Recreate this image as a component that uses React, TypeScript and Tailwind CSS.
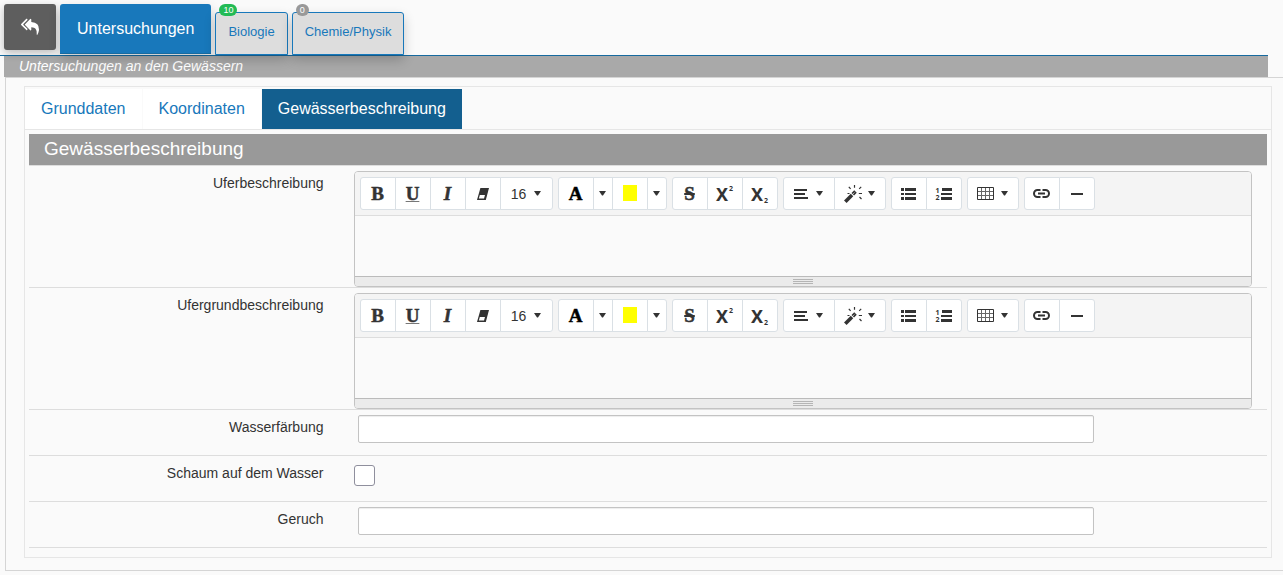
import type { ReactNode } from "react";

const sections = [
  { label: "Biologie", count: 10, badge: "bg-[#22bb55]" },
  { label: "Chemie/Physik", count: 0, badge: "bg-[#999999]" },
];

const tabs = ["Grunddaten", "Koordinaten", "Gewässerbeschreibung"];

function ReplyAllIcon() {
  return (
    <svg width="18" height="18" viewBox="0 0 1792 1792" fill="currentColor" aria-hidden="true">
      <path d="M640 1082v70q0 42-39 59-13 5-25 5-27 0-45-19l-512-512q-19-19-19-45t19-45l512-512q29-31 70-14 39 17 39 59v69l-397 398q-19 19-19 45t19 45zm1152 58q0 58-17 133.500t-38.500 138-48 125-40.500 90.500l-20 40q-8 17-28 17-6 0-9-1-25-8-23-34 43-400-106-565-64-71-170.500-110.500t-267.500-52.500v251q0 42-39 59-13 5-25 5-27 0-45-19l-512-512q-19-19-19-45t19-45l512-512q29-31 70-14 39 17 39 59v262q411 28 599 221 169 173 169 509z" />
    </svg>
  );
}

function Caret() {
  return (
    <svg width="7" height="5" viewBox="0 0 7 5" fill="currentColor" aria-hidden="true">
      <path d="M0 0h7L4 4.4H3z" />
    </svg>
  );
}

function ToolButton({
  title,
  width = "w-9",
  children,
}: {
  title: string;
  width?: string;
  children: ReactNode;
}) {
  return (
    <button
      type="button"
      title={title}
      className={`${width} -ml-px flex h-[33px] items-center justify-center border border-[#dae0e5] bg-white text-[#333] first:ml-0 first:rounded-l-[3px] last:rounded-r-[3px] hover:bg-gray-100`}
    >
      {children}
    </button>
  );
}

function Group({ children }: { children: ReactNode }) {
  return <div className="flex">{children}</div>;
}

const letter =
  "font-['Liberation_Serif',serif] text-[19px] leading-5 font-bold [-webkit-text-stroke:0.5px_currentColor]";

function Toolbar() {
  return (
    <div className="flex flex-wrap gap-[5px] border-b border-[#ddd] bg-[#f4f4f4] p-[5px]">
      <Group>
        <ToolButton title="Fett">
          <span className={letter}>B</span>
        </ToolButton>
        <ToolButton title="Unterstrichen">
          <span className={`${letter} underline decoration-[#777] decoration-1 underline-offset-1`}>U</span>
        </ToolButton>
        <ToolButton title="Kursiv">
          <span className={`${letter} italic`}>I</span>
        </ToolButton>
        <ToolButton title="Formatierung entfernen">
          <svg width="14" height="12" viewBox="0 0 14 12" aria-hidden="true">
            <path d="M4.400 0H13L9.800 12H1z" fill="#333" />
            <path d="M3.800 7h5.200L8 10.600H2.900z" fill="#fff" />
          </svg>
        </ToolButton>
        <ToolButton title="Schriftgröße" width="w-[53px]">
          <span className="flex items-center gap-2 text-sm">
            16 <Caret />
          </span>
        </ToolButton>
      </Group>

      <Group>
        <ToolButton title="Schriftfarbe">
          <span className={`${letter} text-black`}>A</span>
        </ToolButton>
        <ToolButton title="Weitere Schriftfarben" width="w-5">
          <Caret />
        </ToolButton>
        <ToolButton title="Hintergrundfarbe">
          <span className="mb-px h-4 w-[14px] bg-[#ffff00]" />
        </ToolButton>
        <ToolButton title="Weitere Hintergrundfarben" width="w-5">
          <Caret />
        </ToolButton>
      </Group>

      <Group>
        <ToolButton title="Durchgestrichen">
          <span className={`${letter} line-through decoration-2`}>S</span>
        </ToolButton>
        <ToolButton title="Hochgestellt">
          <span className="flex items-start gap-px font-['Noto_Sans',sans-serif] font-bold">
            <span className="text-lg leading-5">X</span>
            <span className="text-[7px] leading-[10px]">2</span>
          </span>
        </ToolButton>
        <ToolButton title="Tiefgestellt">
          <span className="flex items-end gap-px font-['Noto_Sans',sans-serif] font-bold">
            <span className="text-lg leading-5">X</span>
            <span className="text-[7px] leading-[7px]">2</span>
          </span>
        </ToolButton>
      </Group>

      <Group>
        <ToolButton title="Absatz" width="w-[52px]">
          <span className="flex items-center gap-2">
            <svg width="14" height="12" viewBox="0 0 14 12" fill="#333" aria-hidden="true">
              <path d="M0 1h13v2H0zM0 5h11v2H0zM0 9h14v2H0z" />
            </svg>
            <Caret />
          </span>
        </ToolButton>
        <ToolButton title="Stil" width="w-[52px]">
          <span className="flex items-center gap-[6px]">
            <svg width="18" height="18" viewBox="0 0 18 18" fill="none" stroke="#333" aria-hidden="true">
              <path d="M1.300 16.700L8 10" strokeWidth="3.600" />
              <path d="M8.800 9.200L11.500 6.500" strokeWidth="3.600" />
              <path d="M9.200 8.800l1.200-1.200" stroke="#ccc" />
              <path d="M10.500 0v2.800M4.800 1.800l1.800 2M17.200 1.800l-2 2M14.800 8.500H18M15.500 12l2 2M3.500 8.500h2" strokeWidth="1.200" />
            </svg>
            <Caret />
          </span>
        </ToolButton>
      </Group>

      <Group>
        <ToolButton title="Aufzählung">
          <svg width="15" height="12" viewBox="0 0 15 12" fill="#333" aria-hidden="true">
            <path d="M0 0h3v3H0zM4 0h11v3H4zM0 5h3v2H0zM4 5h11v2H4zM0 9h3v3H0zM4 9h11v3H4z" />
          </svg>
        </ToolButton>
        <ToolButton title="Nummerierung">
          <span className="flex items-center gap-px">
            <span className="flex flex-col font-['Noto_Sans',sans-serif] text-[7px] leading-[7px] font-bold">
              <span>1</span>
              <span>2</span>
            </span>
            <svg width="11" height="12" viewBox="0 0 11 12" fill="#333" aria-hidden="true">
              <path d="M1 0h10v3H1zM0 5h11v2H0zM0 9h11v3H0z" />
            </svg>
          </span>
        </ToolButton>
      </Group>

      <Group>
        <ToolButton title="Tabelle" width="w-[52px]">
          <span className="flex items-center gap-[7px]">
            <svg width="17" height="13" viewBox="0 0 17 13" fill="none" aria-hidden="true">
              <path d="M1 4.500h15M1 8.500h15M4.500 1v11M8.500 1v11M12.500 1v11" stroke="#666" />
              <path d="M.5.5h16v12H.5z" stroke="#333" />
            </svg>
            <Caret />
          </span>
        </ToolButton>
      </Group>

      <Group>
        <ToolButton title="Link einfügen">
          <svg width="17" height="9" viewBox="0 0 17 9" fill="none" stroke="#333" strokeWidth="2" aria-hidden="true">
            <path d="M7.500 1H4.500a3.500 3.500 0 0 0 0 7h3M9.500 1h3a3.500 3.500 0 0 1 0 7h-3M5 4.500h7" />
          </svg>
        </ToolButton>
        <ToolButton title="Horizontale Linie">
          <span className="h-[2px] w-3 bg-[#333]" />
        </ToolButton>
      </Group>
    </div>
  );
}

function Editor({ id }: { id: string }) {
  return (
    <div className="overflow-hidden rounded border border-[#c3c3c3]">
      <Toolbar />
      <textarea id={id} className="block h-[60px] w-full resize-none p-2 text-sm outline-none" />
      <div className="flex h-[10px] cursor-ns-resize flex-col items-center gap-px border-t border-[#bbb] bg-[#ebebeb] pt-[2px]">
        <div className="h-px w-5 bg-[#b5b5b5]" />
        <div className="h-px w-5 bg-[#b5b5b5]" />
        <div className="h-px w-5 bg-[#b5b5b5]" />
      </div>
    </div>
  );
}

function Row({ id, label, children }: { id: string; label: string; children: ReactNode }) {
  return (
    <div className="flex min-h-[46px] border-b border-[#ddd]">
      <label htmlFor={id} className="w-1/4 pt-[7px] pr-[15px] text-right text-sm leading-5">
        {label}
      </label>
      <div className="w-3/4 px-[15px] pt-[5px]">{children}</div>
    </div>
  );
}

function TextField({ id }: { id: string }) {
  return (
    <input
      id={id}
      type="text"
      className="ml-1 block h-7 w-[82%] rounded-[2px] border border-[#c3c3c3] bg-white px-2 text-sm shadow-[inset_0_1px_1px_rgba(0,0,0,0.075)] outline-none"
    />
  );
}

export default function App() {
  return (
    <div className="min-h-screen bg-[#fafafa] font-['Liberation_Sans',Arial,sans-serif] text-[#333]">
      <header className="relative z-10 mr-[15px] flex h-14 items-start gap-1 border-b border-[#176a9f] pt-1 pl-1">
        <button
          type="button"
          aria-label="Zurück"
          className="flex h-[46px] w-[52px] items-center justify-center rounded-[3px] bg-[#5e5e5e] text-white shadow-[0_3px_8px_rgba(0,0,0,0.25)]"
        >
          <ReplyAllIcon />
        </button>
        <a
          href="#untersuchungen"
          className="flex h-[50px] items-center rounded-t-[3px] border-b border-[#176a9f] bg-[#1878bb] px-[17px] text-base text-white shadow-[0_5px_12px_rgba(0,0,0,0.2)]"
        >
          Untersuchungen
        </a>
        {sections.map((s) => (
          <a
            key={s.label}
            href={`#${s.label}`}
            className="relative mt-2 flex h-[43px] items-center rounded-t-[3px] border border-[#1878bb] bg-[#ddd] px-3 pb-1 text-[13px] text-[#1878bb] shadow-[0_5px_12px_rgba(0,0,0,0.2)]"
          >
            {s.label}
            <span
              className={`${s.badge} absolute -top-[9px] left-[3px] rounded-full px-1 text-[9px] leading-3 text-white`}
            >
              {s.count}
            </span>
          </a>
        ))}
      </header>

      <p className="mr-[15px] ml-1 bg-[#a9a9a9] pl-[15px] text-sm leading-[21px] text-white italic">
        Untersuchungen an den Gewässern
      </p>

      <main className="ml-[5px] border-y border-l border-[#d5d5d5] pt-2 pr-[11px] pb-3 pl-[18px]">
        <div className="border border-[#e6e6e6] pb-[9px]">
          <nav className="flex border-b border-[#e6e6e6] pt-[2px]">
            {tabs.map((tab) => (
              <a
                key={tab}
                href={`#${tab}`}
                className={
                  tab === "Gewässerbeschreibung"
                    ? "bg-[#135f8f] px-4 text-base leading-10 text-white"
                    : "border-r border-[#fafafa] bg-white px-4 text-base leading-10 text-[#1878bb]"
                }
              >
                {tab}
              </a>
            ))}
          </nav>

          <form className="px-1 pt-1">
            <h2 className="border-b border-[#ddd] bg-[#999] bg-clip-padding pb-[2px] pl-[15px] text-[19px] leading-[29px] text-white">
              Gewässerbeschreibung
            </h2>
            <Row id="ufer" label="Uferbeschreibung">
              <Editor id="ufer" />
            </Row>
            <Row id="ufergrund" label="Ufergrundbeschreibung">
              <Editor id="ufergrund" />
            </Row>
            <Row id="faerbung" label="Wasserfärbung">
              <TextField id="faerbung" />
            </Row>
            <Row id="schaum" label="Schaum auf dem Wasser">
              <input
                id="schaum"
                type="checkbox"
                className="mt-1 block size-[21px] appearance-none rounded-[3px] border border-[#8f8f9d] bg-white checked:bg-[#1878bb]"
              />
            </Row>
            <Row id="geruch" label="Geruch">
              <TextField id="geruch" />
            </Row>
          </form>
        </div>
      </main>
    </div>
  );
}
